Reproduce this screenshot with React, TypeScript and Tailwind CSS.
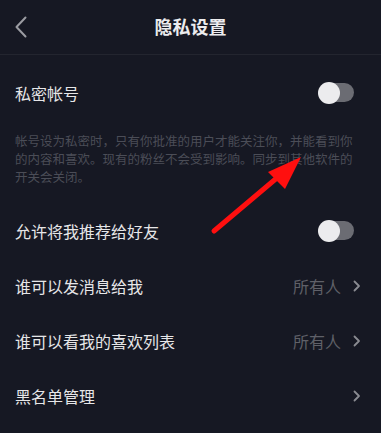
import React from "react";

type RowProps = {
  label: string;
  value?: string;
  toggle?: boolean;
  chevron?: boolean;
};

const Toggle = () => (
  <div className="relative w-[36px] h-[22px] mr-[7px] flex items-center">
    <div className="absolute left-[4px] right-0 h-[19px] rounded-full bg-[#6b6c73]" />
    <div className="absolute left-0 w-[22px] h-[22px] rounded-full bg-[#ececee]" />
  </div>
);

const Chevron = () => (
  <svg width="8" height="12" viewBox="0 0 8 12" className="ml-[12px]">
    <path d="M1.5 1.5 L6 6 L1.5 10.5" fill="none" stroke="#8a8b91" strokeWidth="1.8" strokeLinecap="round" strokeLinejoin="round" />
  </svg>
);

const Row: React.FC<RowProps> = ({ label, value, toggle, chevron }) => (
  <div className="h-[55px] flex items-center justify-between pl-[15px] pr-[20px]">
    <span className="text-[16px] text-[#e6e6e8]">{label}</span>
    <div className="flex items-center">
      {value && <span className="text-[16px] text-[#5f6068]">{value}</span>}
      {chevron && <Chevron />}
      {toggle && <Toggle />}
    </div>
  </div>
);

const App: React.FC = () => {
  return (
    <div
      className="relative w-[381px] h-[433px] bg-[#161823] overflow-hidden"
      style={{ fontFamily: '"Noto Sans CJK SC", "Noto Sans", sans-serif' }}
    >
      <div className="h-[55px] border-b border-[#23252f] flex items-center justify-center relative">
        <svg width="14" height="22" viewBox="0 0 14 22" className="absolute left-[14px] top-[16px]">
          <path d="M11.5 1.5 L2.5 11 L11.5 20.5" fill="none" stroke="#9b9ca2" strokeWidth="2" strokeLinecap="round" strokeLinejoin="round" />
        </svg>
        <span className="text-[18px] font-bold text-[#ececee] -mt-[1px]">隐私设置</span>
      </div>

      <div className="pt-[10px]">
        <Row label="私密帐号" toggle />
      </div>

      <div className="mt-[12px] pl-[15px] text-[12.5px] leading-[18px] text-[#4b4d57]">
        <span className="block whitespace-nowrap">帐号设为私密时，只有你批准的用户才能关注你，并能看到你</span>
        <span className="block whitespace-nowrap">的内容和喜欢。现有的粉丝不会受到影响。同步到其他软件的</span>
        <span className="block whitespace-nowrap">开关会关闭。</span>
      </div>

      <div className="mt-[17px]">
        <Row label="允许将我推荐给好友" toggle />
        <Row label="谁可以发消息给我" value="所有人" chevron />
        <Row label="谁可以看我的喜欢列表" value="所有人" chevron />
        <Row label="黑名单管理" chevron />
      </div>

      <svg className="absolute left-0 top-0 pointer-events-none" width="381" height="433" viewBox="0 0 381 433">
        <line x1="214" y1="231" x2="278" y2="177" stroke="#ff0f0f" strokeWidth="5" strokeLinecap="round" />
        <polygon points="301,157 268,172 285,189" fill="#ff0f0f" />
      </svg>
    </div>
  );
};

export default App;
